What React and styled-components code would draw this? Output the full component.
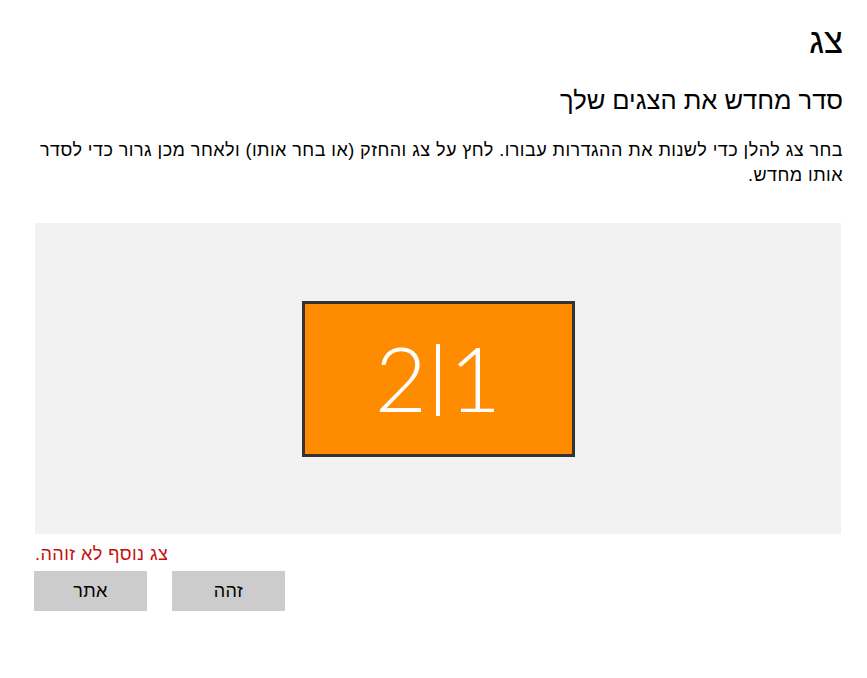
import React from 'react';
import styled, { createGlobalStyle } from 'styled-components';

const GlobalStyle = createGlobalStyle`
  html, body {
    margin: 0;
    padding: 0;
    background: white;
  }
  body {
    font-family: 'Liberation Sans', 'DejaVu Sans', sans-serif;
  }
`;

const Page = styled.div`
  width: 867px;
  height: 678px;
  box-sizing: border-box;
  padding: 18px 24px 0 34px;
  direction: rtl;
  display: flex;
  flex-direction: column;
  color: black;
`;

const Title = styled.h1`
  margin: 0;
  font-size: 35px;
  font-weight: 400;
  line-height: 46px;
`;

const Subtitle = styled.h2`
  margin: 20px 0 0 0;
  font-size: 25.5px;
  font-weight: 400;
  line-height: 32px;
`;

const Description = styled.p`
  margin: 22px 0 0 0;
  font-size: 18px;
  line-height: 25px;
  letter-spacing: 0.45px;
`;

const Canvas = styled.div`
  margin-top: 35px;
  margin-left: 1px;
  margin-right: 2px;
  height: 311px;
  background: #f2f2f2;
  display: flex;
  justify-content: center;
  align-items: center;
  direction: ltr;
`;

const Monitor = styled.div`
  width: 267px;
  height: 150px;
  border: 3px solid #333333;
  background: #ff8c00;
  display: flex;
  justify-content: center;
  align-items: center;
  gap: 9px;
`;

const Digit = styled.span`
  color: white;
  font-family: Lato, 'Open Sans', sans-serif;
  font-weight: 300;
  font-size: 90px;
  line-height: 72px;
  height: 72px;
  display: flex;
  align-items: flex-end;
  margin-top: -3px;
`;

const Separator = styled.span`
  width: 4px;
  height: 72px;
  background: white;
  margin-top: 2px;
`;

const Status = styled.div`
  direction: ltr;
  display: flex;
  margin-top: 9px;
  color: #c50f0f;
  font-size: 18px;
  letter-spacing: 0.45px;
  line-height: 22px;
  padding-left: 1px;
`;

const ButtonRow = styled.div`
  direction: ltr;
  display: flex;
  gap: 25px;
  margin-top: 6px;
`;

const Button = styled.button`
  width: 113px;
  height: 40px;
  border: none;
  background: #cccccc;
  font-family: 'Liberation Sans', 'DejaVu Sans', sans-serif;
  font-size: 18px;
  letter-spacing: 0.4px;
  color: black;
  padding: 0;
  direction: rtl;
`;

export default function App() {
  return (
    <>
      <GlobalStyle />
      <Page>
        <Title>צג</Title>
        <Subtitle>סדר מחדש את הצגים שלך</Subtitle>
        <Description>
          בחר צג להלן כדי לשנות את ההגדרות עבורו. לחץ על צג והחזק (או בחר אותו) ולאחר מכן גרור כדי לסדר אותו מחדש.
        </Description>
        <Canvas>
          <Monitor>
            <Digit>2</Digit>
            <Separator />
            <Digit>1</Digit>
          </Monitor>
        </Canvas>
        <Status>
          <span dir="rtl">צג נוסף לא זוהה.</span>
        </Status>
        <ButtonRow>
          <Button>אתר</Button>
          <Button>זהה</Button>
        </ButtonRow>
      </Page>
    </>
  );
}
